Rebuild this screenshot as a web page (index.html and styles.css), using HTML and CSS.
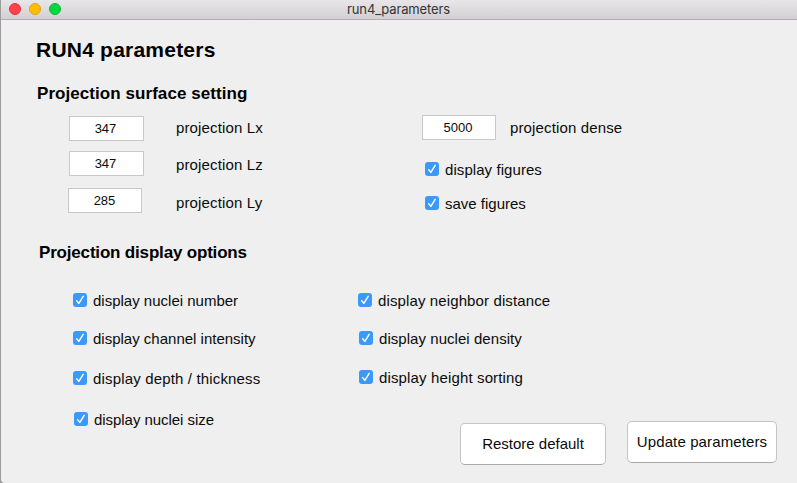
FILE: index.html
```html
<!DOCTYPE html>
<html lang="en">
<head>
<meta charset="utf-8">
<title>run4_parameters</title>
<link rel="stylesheet" href="styles.css">
</head>
<body>
<svg class="defs" width="0" height="0" aria-hidden="true">
  <symbol id="check" viewBox="0 0 14 14"><path class="check-shadow" d="M3.7 8.6 5.9 11.2 10.2 4.2"/><path class="check-mark" d="M3.7 7.8 5.9 10.4 10.2 3.4"/></symbol>
</svg>
<div class="window">
  <header class="titlebar">
    <div class="lights"><span class="light close"></span><span class="light minimize"></span><span class="light zoom"></span></div>
    <span class="window-title">run4_parameters</span>
  </header>
  <main class="content">
    <h1>RUN4 parameters</h1>
    <h2>Projection surface setting</h2>
    <section class="surface">
      <div class="fields">
        <div class="field lx"><span class="input">347</span><span class="label">projection Lx</span></div>
        <div class="field lz"><span class="input">347</span><span class="label">projection Lz</span></div>
        <div class="field ly"><span class="input">285</span><span class="label">projection Ly</span></div>
      </div>
      <div class="figures">
        <div class="field dense"><span class="input">5000</span><span class="label">projection dense</span></div>
        <div class="option show-figures"><svg class="box"><use href="#check"/></svg><span class="label">display figures</span></div>
        <div class="option save-figures"><svg class="box"><use href="#check"/></svg><span class="label">save figures</span></div>
      </div>
    </section>
    <h2 class="display-heading">Projection display options</h2>
    <section class="display">
      <div class="column">
        <div class="option"><svg class="box"><use href="#check"/></svg><span class="label">display nuclei number</span></div>
        <div class="option intensity"><svg class="box"><use href="#check"/></svg><span class="label">display channel intensity</span></div>
        <div class="option depth"><svg class="box"><use href="#check"/></svg><span class="label">display depth / thickness</span></div>
        <div class="option size"><svg class="box"><use href="#check"/></svg><span class="label">display nuclei size</span></div>
      </div>
      <div class="column second">
        <div class="option distance"><svg class="box"><use href="#check"/></svg><span class="label">display neighbor distance</span></div>
        <div class="option density"><svg class="box"><use href="#check"/></svg><span class="label">display nuclei density</span></div>
        <div class="option sorting"><svg class="box"><use href="#check"/></svg><span class="label">display height sorting</span></div>
      </div>
    </section>
    <footer class="actions">
      <button class="restore" type="button">Restore default</button>
      <button class="update" type="button">Update parameters</button>
    </footer>
  </main>
</div>
</body>
</html>
```
FILE: styles.css
```css
* { box-sizing: border-box; }
body { margin: 0; font: 15px/18px "Liberation Sans", Arial, sans-serif; color: #0b0b0b; background: #9c9c9c; }
.defs { display: block; }
.window { width: 796px; height: 483px; margin-left: 1px; overflow: hidden; background: #efefef; border-bottom-left-radius: 4px; }
.titlebar { display: grid; grid-template-columns: 1fr auto 1fr; align-items: center; height: 20px; padding: 0 0 1px 8px; background: linear-gradient(#e8e6e8, #d2d0d2); border-bottom: 1px solid #b1afb1; }
.lights { display: flex; gap: 8px; }
.light { width: 12px; height: 12px; border-radius: 50%; border: 1px solid; }
.close { background: #ff4149; border-color: #e92e3a; }
.minimize { background: #ffbd00; border-color: #e3a11c; }
.zoom { background: #00d742; border-color: #12b536; }
.window-title { font: 13px/18px Inter, "Liberation Sans", sans-serif; letter-spacing: -.15px; color: #353335; margin-left: -9px; }
h1, h2 { margin: 0; color: #000; }
h1 { margin: 17px 0 0 35px; font-size: 21px; line-height: 26px; letter-spacing: .22px; }
h2 { margin: 21px 0 0 36px; font-size: 17px; line-height: 20px; letter-spacing: .06px; }
.surface { display: flex; height: 100px; margin: 12px 0 0 67px; }
.fields { width: 354px; }
.field { display: flex; height: 25px; }
.field .label { letter-spacing: .14px; }
.input { width: 75px; height: 25px; border: 1px solid #c8c8c8; background: #fff; font-size: 13px; line-height: 24px; text-align: center; padding-right: 2px; }
.field .label { margin: 3px 0 0 32px; }
.lx { margin-left: 1px; }
.lz { margin: 10px 0 0 1px; }
.lz .label { margin-top: 5px; }
.ly { margin-top: 12px; }
.ly .input, .dense .input { width: 74px; }
.ly .input { padding-right: 1px; }
.ly .label { margin: 6px 0 0 34px; }
.dense { margin-top: -1px; }
.dense .label { margin: 4px 0 0 14px; }
.option { display: flex; height: 18px; }
.box { width: 14px; height: 14px; margin: 1px 6px 0 0; border-radius: 3px; background: #3b99fc; flex: none; }
.check-mark, .check-shadow { fill: none; stroke: #fff; stroke-width: 1.5; stroke-linecap: round; stroke-linejoin: round; }
.check-shadow { stroke: #1d6dca; stroke-opacity: .4; }
.show-figures { margin: 21px 0 0 3px; letter-spacing: .07px; }
.save-figures { margin: 16px 0 0 3px; }
.display-heading { margin: 27px 0 0 38px; letter-spacing: -.18px; }
.display { display: flex; height: 136px; margin: 29px 0 0 72px; }
.column { width: 285px; }
.intensity, .density { margin-top: 20px; }
.depth { margin-top: 22px; letter-spacing: .16px; }
.size { margin: 23px 0 0 1px; letter-spacing: -.05px; }
.distance { letter-spacing: .12px; }
.density, .sorting { margin-left: 1px; }
.density { letter-spacing: .05px; }
.sorting { margin-top: 21px; letter-spacing: .14px; }
.actions { display: flex; gap: 21px; margin: -7px 20px 0 0; justify-content: flex-end; }
button { height: 42px; padding: 0; border: 1px solid #c4c4c4; border-bottom-color: #a9a9a9; border-radius: 5px; background: #fff; font: inherit; color: inherit; }
.restore { width: 146px; margin-top: 2px; }
.update { width: 150px; letter-spacing: .12px; }
```
